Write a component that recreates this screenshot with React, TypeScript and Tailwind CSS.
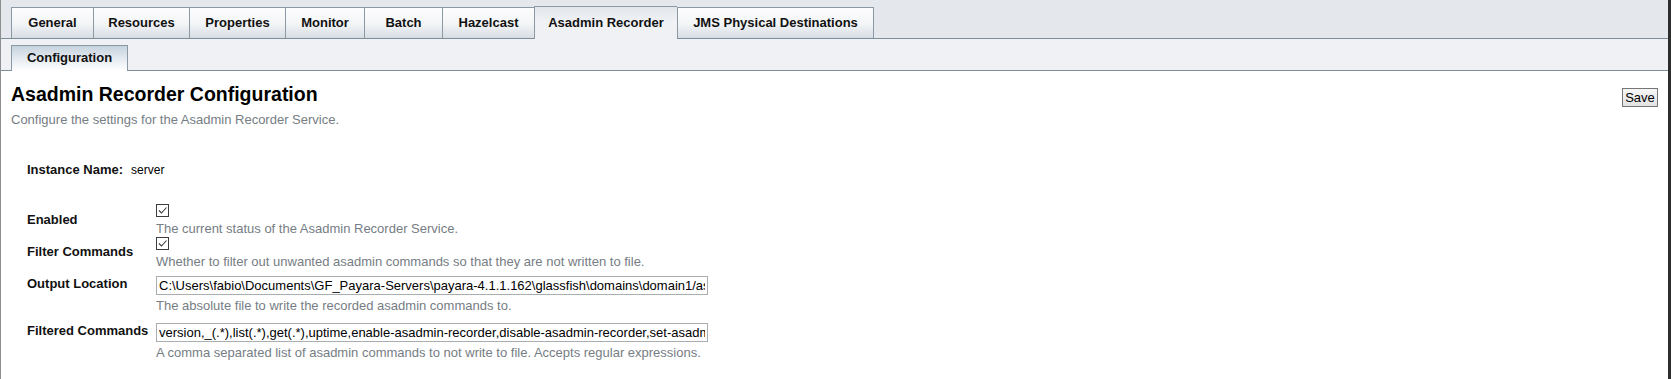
import React from 'react';

type Tab = { label: string; width: string; selected?: boolean };

const tabs: Tab[] = [
  { label: 'General', width: 'w-[82px]' },
  { label: 'Resources', width: 'w-[96px]' },
  { label: 'Properties', width: 'w-[96px]' },
  { label: 'Monitor', width: 'w-[79px]' },
  { label: 'Batch', width: 'w-[78px]' },
  { label: 'Hazelcast', width: 'w-[92px]' },
  { label: 'Asadmin Recorder', width: 'w-[143px]', selected: true },
  { label: 'JMS Physical Destinations', width: 'w-[197px]' },
];

const labelClass = 'text-[13px] font-bold leading-[15px] text-[#111]';
const helpClass = 'text-[13px] leading-[15px] text-[#767d84]';

function CheckBox() {
  return (
    <span className="mt-[1px] mb-[4px] block h-[13px] w-[13px] border border-[#3c3c3c] bg-white">
      <svg viewBox="0 0 11 11" className="h-[11px] w-[11px]">
        <path d="M2 5.5 L4.5 8 L9.5 2.5" fill="none" stroke="#3a3a3a" strokeWidth="1.1" />
      </svg>
    </span>
  );
}

function TextInput({ value }: { value: string }) {
  return (
    <input
      readOnly
      value={value}
      className="block h-[19px] w-[552px] border border-[#a9aeb3] bg-white px-[2px] text-[13px] leading-[17px] text-black outline-none"
    />
  );
}

export default function App() {
  return (
    <div className="h-[379px] w-full overflow-hidden border-l border-l-[#8e8e8e] border-r-[3px] border-r-[#2d2d2d] bg-white font-['Liberation_Sans',Arial,sans-serif]">
      {/* main tabs */}
      <div className="flex h-[39px] items-end border-b border-[#7e8e99] bg-[#e4e7eb] pl-[10px]">
        {tabs.map((tab, i) => (
          <div
            key={tab.label}
            className={
              (tab.selected
                ? 'relative -mb-px h-[33px] border-t bg-[linear-gradient(#e2e6eb,#eff1f5_45%)] '
                : 'h-[31px] border-t bg-[linear-gradient(#fdfdfe,#f2f4f6_55%,#d6dde4)] ') +
              (i === tabs.length - 1 ? 'border-r ' : '') +
              'flex items-center justify-center border-l border-[#8a99a4] text-[13px] font-bold text-[#111] ' +
              tab.width
            }
          >
            {tab.label}
          </div>
        ))}
      </div>

      {/* sub tabs */}
      <div className="flex h-[32px] items-end border-b border-[#7e8e99] bg-[#eff1f5] pl-[10px]">
        <div className="-mb-px flex h-[26px] w-[117px] items-center justify-center border-x border-t border-[#8a99a4] bg-[linear-gradient(#c6d3de,#e4eaf0_50%,#ffffff)] pb-[1px] text-[13px] font-bold text-[#111]">
          Configuration
        </div>
      </div>

      {/* content */}
      <div className="px-[10px]">
        <div className="flex items-start justify-between">
          <div className="mt-[12px]">
            <h1 className="text-[19.5px] font-bold leading-[23px] text-black">
              Asadmin Recorder Configuration
            </h1>
            <p className="mt-[6px] text-[13px] leading-[15px] text-[#767d84]">
              Configure the settings for the Asadmin Recorder Service.
            </p>
          </div>
          <button className="mt-[17px] h-[19px] w-[36px] border border-[#767676] bg-[linear-gradient(#f7f7f7,#e2e2e2)] text-[13px] leading-[16px] text-black">
            Save
          </button>
        </div>

        <div className="pl-[16px]">
          <div className="mt-[35px] flex items-baseline gap-[8px]">
            <span className={labelClass}>Instance Name:</span>
            <span className="text-[12px] leading-[15px] text-black">server</span>
          </div>

          <div className="mt-[25px] grid grid-cols-[129px_1fr]">
            <div className={labelClass + ' pt-[9px]'}>Enabled</div>
            <div>
              <CheckBox />
              <div className={helpClass}>The current status of the Asadmin Recorder Service.</div>
            </div>

            <div className={labelClass + ' pt-[8px]'}>Filter Commands</div>
            <div>
              <CheckBox />
              <div className={helpClass}>
                Whether to filter out unwanted asadmin commands so that they are not written to file.
              </div>
            </div>

            <div className={labelClass + ' mt-[7px]'}>Output Location</div>
            <div className="mt-[7px]">
              <TextInput value="C:\Users\fabio\Documents\GF_Payara-Servers\payara-4.1.1.162\glassfish\domains\domain1/asadmin-commands.txt" />
              <div className={helpClass + ' mt-[3px]'}>The absolute file to write the recorded asadmin commands to.</div>
            </div>

            <div className={labelClass + ' mt-[10px]'}>Filtered Commands</div>
            <div className="mt-[10px]">
              <TextInput value="version,_(.*),list(.*),get(.*),uptime,enable-asadmin-recorder,disable-asadmin-recorder,set-asadmin-recorder-configuration,asadmin-recorder-enabled" />
              <div className={helpClass + ' mt-[3px]'}>
                A comma separated list of asadmin commands to not write to file. Accepts regular expressions.
              </div>
            </div>
          </div>
        </div>
      </div>
    </div>
  );
}
